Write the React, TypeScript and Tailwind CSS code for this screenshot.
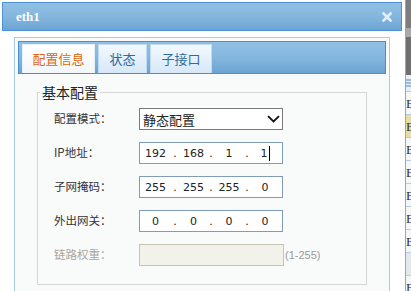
import React from "react";

const cjk = "font-['Noto_Sans_CJK_SC','Noto_Sans',sans-serif]";

function IpBox({ parts, cursor }: { parts: string[]; cursor?: boolean }) {
  const widths = ["w-[31px]", "w-[29px]", "w-[30px]", "w-[30px]"];
  const dots = ["w-[8px]", "w-[6px]", "w-[6px]"];
  return (
    <div className="w-[144px] h-[22px] border border-[#7f9db9] bg-white flex items-center font-['DejaVu_Sans',sans-serif] text-[11px] text-[#222] leading-none">
      {parts.map((p, i) => (
        <React.Fragment key={i}>
          <div className={`${widths[i]} text-center flex items-center justify-center`}>
            <span>{p}</span>
            {cursor && i === 3 ? <span className="inline-block w-px h-[15px] bg-black ml-[1px]" /> : null}
          </div>
          {i < 3 ? <div className={`${dots[i]} text-center`}>.</div> : null}
        </React.Fragment>
      ))}
    </div>
  );
}

function Row({ label, children, disabled }: { label: string; children: React.ReactNode; disabled?: boolean }) {
  return (
    <div className="flex items-center h-[22px]">
      <div className={`w-[85px] text-[11.5px] leading-none ${disabled ? "text-[#a8a69c]" : "text-[#333]"}`}>{label}</div>
      {children}
    </div>
  );
}

export default function App() {
  const rows = [
    { t: "B", bg: "bg-[#f4f6f8]" },
    { t: "B", bg: "bg-[#e9de9c]" },
    { t: "B", bg: "bg-[#f4f6f8]" },
    { t: "B", bg: "bg-[#f4f6f8]" },
    { t: "B", bg: "bg-[#f4f6f8]" },
    { t: "B", bg: "bg-[#f4f6f8]" },
    { t: "B", bg: "bg-[#f4f6f8]" },
    { t: "", bg: "bg-[#e4e9ee]" },
    { t: "B", bg: "bg-[#f4f6f8]" },
  ];
  return (
    <div className={`w-[411px] h-[291px] overflow-hidden flex bg-white ${cjk}`}>
      <div className="w-[405px] h-[291px] flex flex-col pt-[2px] pl-[2px] bg-white">
        <div className="w-[400px] h-[29px] shrink-0 border border-[#4a93d6] bg-[linear-gradient(to_bottom,#92c0e4,#82b5dd_55%,#6ba4d1)] flex items-center justify-between pl-[13px] pr-[9px]">
          <span className="font-['Liberation_Serif',serif] font-bold text-[13px] text-white leading-none">eth1</span>
          <svg width="10" height="10" viewBox="0 0 10 10">
            <path d="M1.5 1.5 L8.5 8.5 M8.5 1.5 L1.5 8.5" stroke="#e6eff8" strokeWidth="2.6" strokeLinecap="square" />
          </svg>
        </div>
        <div className="ml-[12px] mt-[6px] w-[376px] flex-1 border border-b-0 border-[#a9cce6] bg-[#f9fbfb] p-[3px] overflow-hidden">
          <div className="h-[33px] border border-[#4690d2] bg-[linear-gradient(to_bottom,#92c0e4,#82b5dd_55%,#6ba4d1)] flex items-end pl-[3px] gap-[3px]">
            <div className="w-[73px] h-[29px] border border-b-0 border-[#e4eff8] bg-[linear-gradient(to_bottom,#ffffff,#f2f7fa)] flex items-center justify-center text-[13px] text-[#e0670c]">
              配置信息
            </div>
            <div className="w-[49px] h-[29px] border border-b-0 border-[#c3dbf0] bg-[linear-gradient(to_bottom,#f3f9fe,#d6e8f8)] flex items-center justify-center text-[13px] text-[#2f6a9e]">
              状态
            </div>
            <div className="w-[62px] h-[29px] border border-b-0 border-[#c3dbf0] bg-[linear-gradient(to_bottom,#f3f9fe,#d6e8f8)] flex items-center justify-center text-[13px] text-[#2f6a9e]">
              子接口
            </div>
          </div>
          <fieldset className="mt-[9px] mx-[19px] border border-[#d6d6d6] p-0 min-w-0">
            <legend className="ml-[2px] px-[2px] text-[14px] leading-[18px] text-[#222]">基本配置</legend>
            <div className="px-[16px] pt-[7px] pb-[18px] flex flex-col gap-[12px]">
              <Row label="配置模式：">
                <div className="w-[144px] h-[22px] border border-[#7a7a7a] bg-white flex items-center justify-between pl-[3px] pr-[2px]">
                  <span className="text-[13px] text-[#222] leading-none">静态配置</span>
                  <svg width="13" height="8" viewBox="0 0 13 8">
                    <path d="M1 1.2 L6.5 6.5 L12 1.2" fill="none" stroke="#111" strokeWidth="1.8" />
                  </svg>
                </div>
              </Row>
              <Row label="IP地址：">
                <IpBox parts={["192", "168", "1", "1"]} cursor />
              </Row>
              <Row label="子网掩码：">
                <IpBox parts={["255", "255", "255", "0"]} />
              </Row>
              <Row label="外出网关：">
                <IpBox parts={["0", "0", "0", "0"]} />
              </Row>
              <Row label="链路权重：" disabled>
                <div className="w-[145px] h-[22px] border border-[#c7c4b4] bg-[#f2f1ea]" />
                <span className="ml-[1px] font-['Liberation_Sans',sans-serif] text-[11px] text-[#9a9a9a] leading-none">(1-255)</span>
              </Row>
            </div>
          </fieldset>
        </div>
      </div>
      <div className="w-[6px] h-[291px] border-l border-[#9aa7b3] flex flex-col overflow-hidden">
        <div className="h-[28px] shrink-0 bg-[#7d7d7d]" />
        <div className="h-[9px] shrink-0 bg-[#a9a9a9]" />
        <div className="h-[38px] shrink-0 bg-[#6f6f6f]" />
        <div className="h-[17px] shrink-0 bg-[#e8eef5] border-b border-[#b5cce2] flex items-center">
          <svg width="5" height="8" viewBox="0 0 5 8">
            <path d="M0 1 H5 M0 4 H5 M0 7 H5" stroke="#4a88c8" strokeWidth="1" />
          </svg>
        </div>
        {rows.map((r, i) => (
          <div key={i} className={`h-[23px] shrink-0 border-b border-[#b5cce2] ${r.bg} flex items-center font-['Liberation_Serif',serif] text-[13px] text-[#333] leading-none`}>
            {r.t}
          </div>
        ))}
      </div>
    </div>
  );
}
